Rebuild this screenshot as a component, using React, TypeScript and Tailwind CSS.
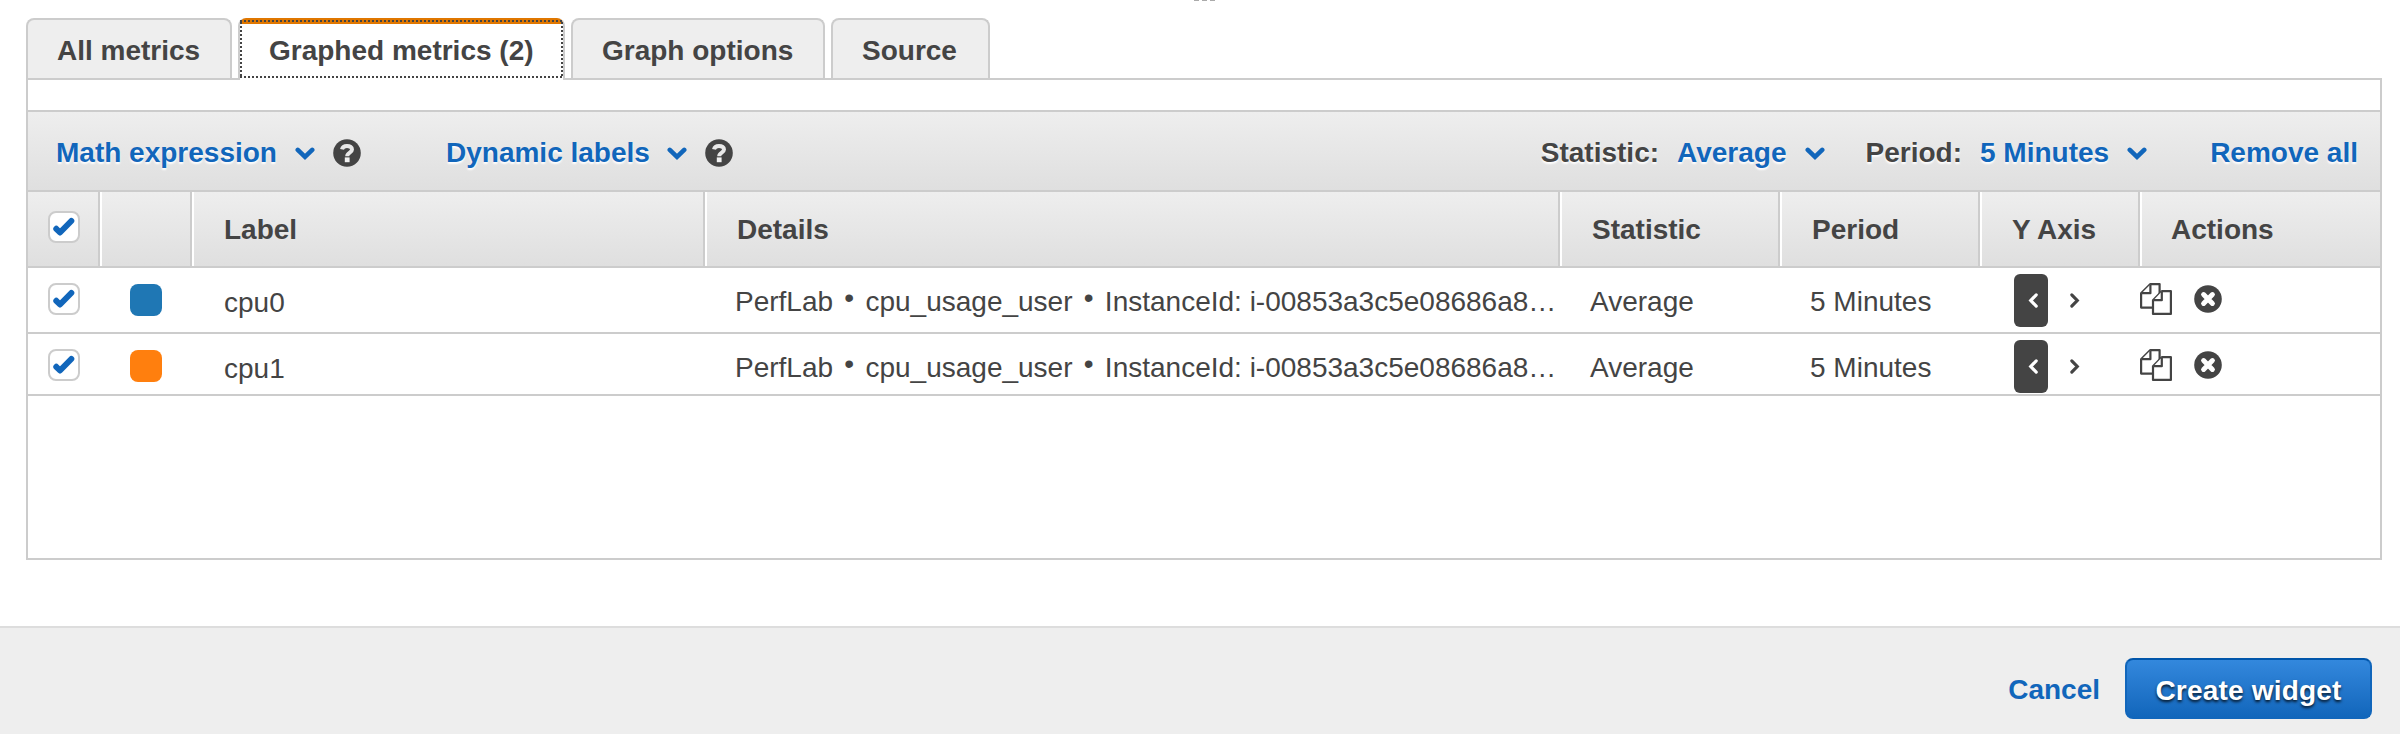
import React from "react";

const Chevron = ({ className, w = 4.6 }: { className?: string; w?: number }) => (
  <svg viewBox="0 0 20 14" className={className} fill="none" stroke="currentColor" strokeWidth={w} strokeLinecap="round" strokeLinejoin="miter">
    <path d="M2.8 2.9 L10 9.9 L17.2 2.9" />
  </svg>
);

const Help = () => (
  <svg viewBox="0 0 28 28" className="h-7 w-7 shrink-0">
    <circle cx="14" cy="14" r="13.8" fill="#444" />
    <path d="M9 10.4 C9.6 7.8 11.6 7 14 7 C17 7 19 8.4 19 10.6 C19 13.8 14.2 13.4 14.2 17.2" fill="none" stroke="#e8e8e8" strokeWidth="4" />
    <rect x="11.8" y="18.4" width="4.8" height="4.8" fill="#f2f2f2" />
  </svg>
);

const Check = () => (
  <span className="flex h-8 w-8 items-center justify-center rounded-[8px] border-2 border-[#ccc] bg-white">
    <svg viewBox="0 0 28 28" className="h-7 w-7 shrink-0" fill="none" stroke="#1166bb" strokeWidth="6" strokeLinecap="round" strokeLinejoin="round">
      <path d="M6.3 15.8 L10 19.5 L21.3 8" />
    </svg>
  </span>
);

const Copy = () => (
  <svg viewBox="0 0 32 32" className="h-8 w-8" fill="#fff" stroke="#444" strokeWidth="2.2" strokeLinejoin="round">
    <path d="M1.1 10.4 L10.4 1.1 H19.6 V24.6 H1.1 Z" />
    <path d="M1.6 10.2 H10.4 V1.6" />
    <path d="M13 17.2 L21.8 8.2 H30.9 V30.9 H13 Z" />
    <path d="M13.4 17.2 H21.8 V8.6" />
  </svg>
);

const Remove = () => (
  <svg viewBox="0 0 28 28" className="h-7 w-7">
    <circle cx="14" cy="14" r="13.8" fill="#444" />
    <path d="M9.6 9.6 L18.4 18.4 M18.4 9.6 L9.6 18.4" stroke="#fff" strokeWidth="5" strokeLinecap="round" />
  </svg>
);

const Head = ({ children, last }: { children?: React.ReactNode; last?: boolean }) => (
  <div className={last ? "flex items-center pt-0.5 pl-[31px]" : "flex items-center border-r-2 border-[#ccc] pt-0.5 pl-8 shadow-[2px_0_0_#fff]"}>
    {children}
  </div>
);

const Dot = () => <span className="relative -top-1 mx-[3.5px]">•</span>;

const cols = "grid grid-cols-[72px_92px_513px_855px_220px_200px_160px_240px]";

const Row = ({ label, swatch, className }: { label: string; swatch: string; className: string }) => (
  <div className={`${cols} border-b-2 border-[#ccc] ${className}`}>
    <div className="pt-[15px] pl-5"><Check /></div>
    <div className="pt-4 pl-[30px]"><span className={`block h-8 w-8 rounded-[8px] ${swatch}`} /></div>
    <div className="pt-[19px] pl-8">{label}</div>
    <div className="pt-[18px] pl-[30px] whitespace-nowrap">
      PerfLab <Dot /> cpu_usage_user <Dot /> InstanceId: i-00853a3c5e08686a8…
    </div>
    <div className="pt-[18px] pl-[30px]">Average</div>
    <div className="pt-[18px] pl-[30px]">5 Minutes</div>
    <div className="flex items-start pt-1.5 pl-[34px]">
      <span className="flex h-[53px] w-[34px] items-center justify-center rounded-[6px] bg-[#444] pl-[3px] text-white">
        <Chevron className="h-[11px] w-4 rotate-90" w={4} />
      </span>
      <span className="ml-[10px] flex h-[53px] w-[34px] items-center justify-center text-[#444]">
        <Chevron className="h-[11px] w-4 -rotate-90" w={4} />
      </span>
    </div>
    <div className="flex items-start gap-[22px] pt-[15px]">
      <Copy />
      <span className="pt-0.5"><Remove /></span>
    </div>
  </div>
);

const tab = "flex h-[60px] items-center rounded-t-[8px] border-2 border-b-0 border-[#ccc] bg-[#eee] pt-1 font-bold whitespace-nowrap";

export default function App() {
  return (
    <div className="flex h-[734px] w-[2400px] flex-col overflow-hidden bg-white font-['Liberation_Sans',Arial,sans-serif] text-[28px] leading-8 text-[#444]">
      <div className="flex h-[18px] justify-center gap-[3px] pl-[8px]">
        <i className="h-px w-[5px] bg-[#aaa]" />
        <i className="h-px w-[5px] bg-[#aaa]" />
        <i className="h-px w-[5px] bg-[#aaa]" />
      </div>

      <div className="relative z-10 -mb-0.5 flex h-[62px] gap-1.5 pl-[26px]">
        <div className={`${tab} w-[206px] pl-[29px]`}>All metrics</div>
        <div className="relative flex h-[62px] w-[327px] rounded-t-[8px] border-x-2 border-[#ccc] bg-white">
          <div className="flex h-[60px] w-full items-center rounded-t-[6px] border-t-[6px] border-[#e07700] pl-[29px] font-bold whitespace-nowrap">
            Graphed metrics (2)
          </div>
          <svg className="absolute top-0 left-0 h-[60px] w-[323px]" fill="none" stroke="#444" strokeWidth="2" strokeDasharray="2 2">
            <path d="M0 3 H323 M0 59 H323 M1 4 V60 M322 4 V60" />
          </svg>
        </div>
        <div className={`${tab} w-[254px] pl-[29px]`}>Graph options</div>
        <div className={`${tab} w-[159px] pl-[29px]`}>Source</div>
      </div>

      <div className="mx-[26px] h-[482px] w-[2356px] shrink-0 border-2 border-[#ccc]">
        <div className="h-[30px]" />
        <div className="flex h-[82px] items-center border-y-2 border-[#ccc] bg-linear-to-b from-[#eee] to-[#dfdfdf] pr-[22px] pl-[28px] pt-1 font-bold whitespace-nowrap text-[#1166bb] [text-shadow:0_2px_2px_#fff]">
          <span className="w-[221px]">Math expression</span>
          <Chevron className="mt-0.5 ml-[18px] h-[14px] w-5" />
          <span className="ml-[18px]"><Help /></span>
          <span className="ml-[85px] w-[203px]">Dynamic labels</span>
          <Chevron className="mt-0.5 ml-[18px] h-[14px] w-5" />
          <span className="ml-[18px]"><Help /></span>
          <span className="ml-auto text-[#444]">Statistic:</span>
          <span className="ml-[18px]">Average</span>
          <Chevron className="mt-0.5 ml-[18px] h-[14px] w-5" />
          <span className="ml-[41px] text-[#444]">Period:</span>
          <span className="ml-[18px]">5 Minutes</span>
          <Chevron className="mt-0.5 ml-[18px] h-[14px] w-5" />
          <span className="ml-[63px]">Remove all</span>
        </div>
        <div className={`${cols} h-[76px] border-b-2 border-[#ccc] bg-linear-to-b from-[#eee] to-[#dfdfdf] font-bold`}>
          <div className="border-r-2 border-[#ccc] pt-[19px] pl-5 shadow-[2px_0_0_#fff]"><Check /></div>
          <Head />
          <Head>Label</Head>
          <Head>Details</Head>
          <Head>Statistic</Head>
          <Head>Period</Head>
          <Head>Y Axis</Head>
          <Head last>Actions</Head>
        </div>
        <Row label="cpu0" swatch="bg-[#1f77b4]" className="h-[66px]" />
        <Row label="cpu1" swatch="bg-[#ff7f0e]" className="h-[62px]" />
      </div>

      <div className="mt-[66px] flex h-[108px] shrink-0 items-start justify-end border-t-2 border-[#ddd] bg-[#eee] pt-[30px] pr-7 font-bold">
        <span className="mt-4 mr-[25px] text-[#1166bb]">Cancel</span>
        <button className="flex h-[61px] w-[247px] items-center justify-center rounded-[8px] border-2 border-[#1166bb] border-t-[#0055aa] bg-linear-to-b from-[#3388dd] to-[#1166bb] pt-1 tracking-[0.2px] text-white [text-shadow:0_2px_3px_rgba(0,0,0,0.8)]">
          Create widget
        </button>
      </div>
    </div>
  );
}
